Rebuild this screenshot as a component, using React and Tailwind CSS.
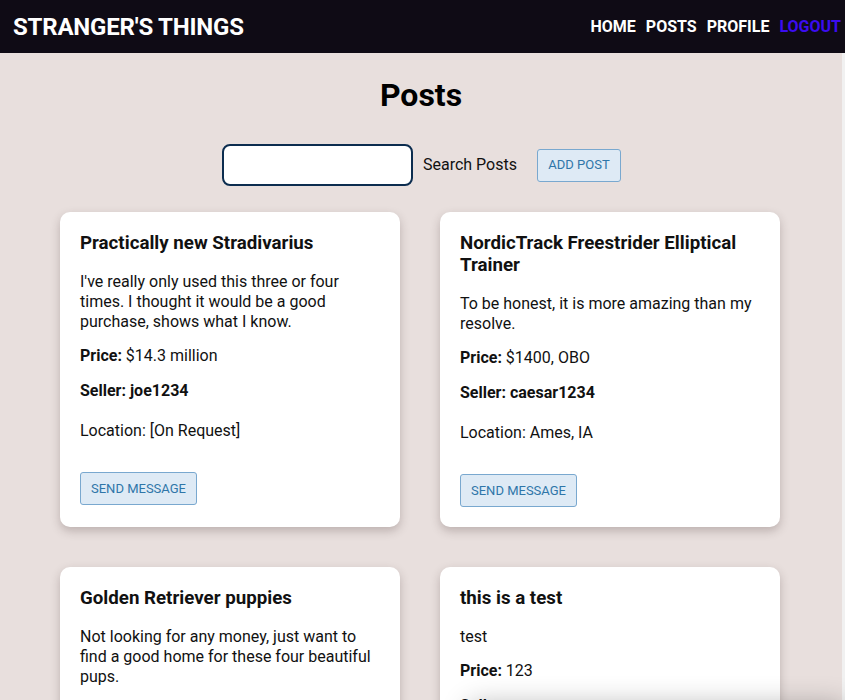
const posts = [
  {
    title: 'Practically new Stradivarius',
    description: "I've really only used this three or four times. I thought it would be a good purchase, shows what I know.",
    price: '$14.3 million',
    seller: 'joe1234',
    location: '[On Request]',
  },
  {
    title: 'NordicTrack Freestrider Elliptical Trainer',
    description: 'To be honest, it is more amazing than my resolve.',
    price: '$1400, OBO',
    seller: 'caesar1234',
    location: 'Ames, IA',
  },
  {
    title: 'Golden Retriever puppies',
    description: 'Not looking for any money, just want to find a good home for these four beautiful pups.',
    price: 'Free',
    seller: 'sam1234',
    location: 'Denver, CO',
  },
  {
    title: 'this is a test',
    description: 'test',
    price: '123',
    seller: 'tester',
    location: '[On Request]',
  },
]

function PostCard({ post }) {
  return (
    <div className="bg-white rounded-[10px] shadow-[0_4px_10px_rgba(60,40,40,0.25)] px-5 pt-5 pb-5 text-[#111]">
      <h3 className="text-[18.72px] leading-[22px] font-bold">{post.title}</h3>
      <p className="mt-[18px] text-[16px] leading-[20px]">{post.description}</p>
      <p className="mt-[14px] text-[16px] leading-[20px]">
        <span className="font-bold">Price:</span> {post.price}
      </p>
      <p className="mt-[15px] text-[16px] leading-[20px] font-bold">Seller: {post.seller}</p>
      <p className="mt-[20px] text-[16px] leading-[20px]">Location: {post.location}</p>
      <button className="mt-[31px] h-[33px] px-[10px] rounded-[3px] border border-[#79a8cf] bg-[#deeaf5] text-[13px] text-[#2f76a9] uppercase">
        Send Message
      </button>
    </div>
  )
}

export default function App() {
  return (
    <div className="w-[845px] h-[700px] overflow-hidden relative" style={{ fontFamily: "Roboto, 'Liberation Sans', sans-serif" }}>
      {/* header */}
      <div className="h-[53px] bg-[#0f0b15] flex items-center justify-between pl-[13px] pr-[4px]">
        <div className="text-white text-[24px] font-bold tracking-[-0.2px]">STRANGER'S THINGS</div>
        <nav className="flex gap-[10px] text-[16px] font-bold">
          <span className="text-white">HOME</span>
          <span className="text-white">POSTS</span>
          <span className="text-white">PROFILE</span>
          <span className="text-[#3b0cf0]">LOGOUT</span>
        </nav>
      </div>

      <div className="flex">
        <main className="w-[842px] bg-[#e8dfdd] min-h-[647px] flex flex-col items-center">
          <h1 className="mt-[23px] text-[32px] leading-[38px] font-bold text-black">Posts</h1>

          <div className="mt-[30px] ml-[1px] flex items-center">
            <input className="w-[191px] h-[42px] rounded-[8px] border-2 border-[#0c2d4f] bg-white outline-none" />
            <span className="ml-[10px] text-[16px] text-[#111]">Search Posts</span>
            <button className="ml-[20px] h-[33px] w-[84px] rounded-[3px] border border-[#79a8cf] bg-[#deeaf5] text-[13px] text-[#2f76a9] uppercase">
              Add Post
            </button>
          </div>

          <div className="mt-[26px] mr-[2px] grid grid-cols-[340px_340px] gap-[40px]">
            {posts.map((p) => (
              <PostCard key={p.title} post={p} />
            ))}
          </div>
        </main>
        <div className="w-[3px] bg-[#f1f1f1]" />
      </div>

      <div className="absolute left-[470px] right-0 top-[705px] h-[40px] bg-white shadow-[0_0_28px_rgba(0,0,0,0.3)]" />
    </div>
  )
}
